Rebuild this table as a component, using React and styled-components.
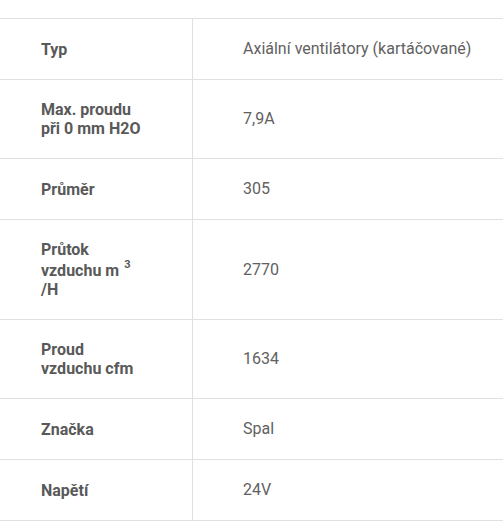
import React from 'react';
import styled, { createGlobalStyle } from 'styled-components';

const GlobalStyle = createGlobalStyle`
  body {
    margin: 0;
    background: #fff;
    font-family: Roboto, 'Liberation Sans', sans-serif;
  }
`

const Wrapper = styled.div`
  padding-top: 18px;
`

const SpecTable = styled.table`
  width: 503px;
  border-collapse: separate;
  border-spacing: 0;
  border-top: 1px solid #e0e0e0;
  table-layout: fixed;
`

const Label = styled.th`
  width: 151px;
  padding: 20px 0 20px 41px;
  text-align: left;
  vertical-align: middle;
  font-size: 16px;
  line-height: 19px;
  font-weight: 700;
  color: #595959;
  border-right: 1px solid #e0e0e0;
  border-bottom: 1px solid #e0e0e0;

  sup {
    font-size: 11px;
    line-height: 11px;
    margin-left: 1px;
    vertical-align: 8px;
  }
`

const Value = styled.td`
  padding: 20px 10px 20px 50px;
  vertical-align: middle;
  font-size: 16px;
  line-height: 20px;
  color: #616161;
  border-bottom: 1px solid #e0e0e0;
`

const specs = [
  { label: <>Typ</>, value: 'Axiální ventilátory (kartáčované)' },
  { label: <>Max. proudu<br />při 0 mm H2O</>, value: '7,9A' },
  { label: <>Průměr</>, value: '305' },
  { label: <>Průtok<br />vzduchu m <sup>3</sup><br />/H</>, value: '2770' },
  { label: <>Proud<br />vzduchu cfm</>, value: '1634' },
  { label: <>Značka</>, value: 'Spal' },
  { label: <>Napětí</>, value: '24V' },
]

const App = () => {
  return (
    <Wrapper>
      <GlobalStyle />
      <SpecTable>
        <tbody>
          {specs.map((s, i) => (
            <tr key={i}>
              <Label scope="row">{s.label}</Label>
              <Value>{s.value}</Value>
            </tr>
          ))}
        </tbody>
      </SpecTable>
    </Wrapper>
  );
}

export default App;
